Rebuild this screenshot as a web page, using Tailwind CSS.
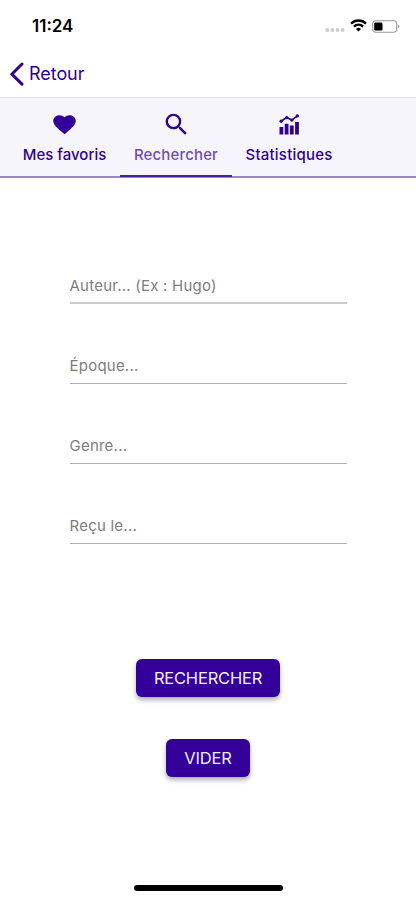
<!DOCTYPE html>
<html lang="fr">
<head>
<meta charset="utf-8">
<meta name="viewport" content="width=device-width">
<title>Rechercher</title>
<script src="https://cdn.jsdelivr.net/npm/@tailwindcss/browser@4"></script>
</head>
<body class="bg-white font-[Inter,sans-serif]">
<div class="flex h-[900px] w-[416px] flex-col overflow-hidden whitespace-nowrap">
  <header class="flex h-[98px] shrink-0 flex-col border-b border-[#e2e1e8]">
    <div class="flex h-[50px] items-center justify-between pt-[2px] pr-[16px] pl-[32px]">
      <span class="text-[17px] leading-5 font-semibold text-black">11:24</span>
      <div class="flex items-center">
        <svg class="mt-[7px] mr-[5px] h-[4px] w-[20px]" viewBox="0 0 20 4" fill="#cbcbcb"><circle cx="2.3" cy="2" r="1.9"/><circle cx="7.4" cy="2" r="1.9"/><circle cx="12.5" cy="2" r="1.9"/><circle cx="17.6" cy="2" r="1.9"/></svg>
        <svg class="-mt-px mr-[5px] h-[13px] w-[17px]" viewBox="0 0 17 13" fill="none" stroke="#000" stroke-width="2.3"><path d="M1 4.6a10.6 10.6 0 0 1 15 0"/><path d="M3.9 7.6a6.5 6.5 0 0 1 9.2 0"/><path d="M8.5 12.4 6 9.9a3.6 3.6 0 0 1 5 0z" fill="#000" stroke="none"/></svg>
        <svg class="h-[13px] w-[28px]" viewBox="0 0 28 13"><rect x=".7" y=".7" width="24" height="11.6" rx="3.2" fill="none" stroke="#999" stroke-width="1.1"/><rect x="2.2" y="2.5" width="8.3" height="8" rx="1.2"/><path d="M26 4.5q1.4.6 1.4 2t-1.4 2z" fill="#999"/></svg>
      </div>
    </div>
    <div class="flex h-[47px] items-center pl-[9px] text-[#31008f]">
      <svg class="h-[24px] w-[16px]" viewBox="0 0 16 24" fill="none" stroke="currentColor" stroke-width="3" stroke-linecap="round" stroke-linejoin="round"><path d="M13 2 2.8 12.2 13 22.1"/></svg>
      <span class="ml-[4px] text-[18px] leading-6 tracking-[-0.05px]">Retour</span>
    </div>
  </header>
  <nav class="flex h-[80px] shrink-0 border-b-2 border-b-[#9a85ca] bg-[#f6f5fc] pl-[9px] text-[15px] leading-5 font-medium text-[#31008f]">
    <div class="flex w-[111px] flex-col items-center pt-[14px]">
      <svg class="h-[25px] w-[27px]" viewBox="0 0 24 24" fill="#330099" preserveAspectRatio="none"><path d="m12 21.35-1.45-1.32C5.4 15.36 2 12.28 2 8.5 2 5.42 4.42 3 7.5 3c1.74 0 3.41.81 4.5 2.09C13.09 3.81 14.76 3 16.5 3 19.58 3 22 5.42 22 8.5c0 3.78-3.4 6.86-8.55 11.54z"/></svg>
      <span class="mt-[8px]">Mes favoris</span>
    </div>
    <div class="-mb-px flex w-[112px] flex-col items-center border-b-2 border-[#43208f] pt-[12px]">
      <svg class="h-[29px] w-[29px]" viewBox="0 0 24 24" fill="currentColor"><path d="M15.5 14h-.79l-.28-.27A6.47 6.47 0 0 0 16 9.5 6.5 6.5 0 1 0 9.5 16c1.61 0 3.09-.59 4.23-1.57l.27.28v.79l5 4.99L20.49 19zm-6 0C7.01 14 5 11.99 5 9.5S7.01 5 9.5 5 14 7.01 14 9.5 11.99 14 9.5 14"/></svg>
      <span class="mt-[6px] tracking-[0.15px] text-[#6f4db0]">Rechercher</span>
    </div>
    <div class="flex w-[114px] flex-col items-center pt-[16px]">
      <svg class="h-[21px] w-[21px]" viewBox="0 0 21 21" fill="currentColor"><path d="M.5 13h3.8v7.5H.5zM5.7 9.7h3.8v10.8H5.7zM10.9 11.5h3.8v9h-3.8zM16.1 8h3.8v12.5h-3.8z"/><path d="M2 7.3 7.7 3.5l5.2 2.6 5.5-4.3" fill="none" stroke="currentColor" stroke-width="1.7"/><circle cx="2.2" cy="7.3" r="1.7"/><circle cx="7.7" cy="3.6" r="1.7"/><circle cx="12.9" cy="6.1" r="1.7"/><circle cx="18.3" cy="1.9" r="1.7"/></svg>
      <span class="mt-[10px] tracking-[0.22px]">Statistiques</span>
    </div>
  </nav>
  <main class="flex flex-1 flex-col items-center">
    <form class="mt-[95px] flex w-[277px] flex-col gap-[49px] text-[15px] leading-5 tracking-[0.23px] text-[#7d7d7d]">
      <div class="h-[31px] border-b-2 border-[#cbcbcb] pt-[3px]">Auteur... (Ex : Hugo)</div>
      <div class="h-[31px] border-b border-[#b2b2b2] pt-[3px]">Époque...</div>
      <div class="h-[31px] border-b border-[#b2b2b2] pt-[3px]">Genre...</div>
      <div class="h-[31px] border-b border-[#b2b2b2] pt-[3px]">Reçu le...</div>
    </form>
    <button class="mt-[115px] h-[38px] w-[144px] rounded-[6px] bg-[#330099] text-[16.5px] tracking-[-0.2px] text-[#f3effc] shadow-[0_3px_5px_rgba(0,0,0,0.32)]">RECHERCHER</button>
    <button class="mt-[42px] h-[38px] w-[84px] rounded-[6px] bg-[#330099] text-[16.5px] tracking-[-0.2px] text-[#f3effc] shadow-[0_3px_5px_rgba(0,0,0,0.32)]">VIDER</button>
    <div class="mt-auto mb-[9px] h-[6px] w-[149px] rounded-full bg-black"></div>
  </main>
</div>
</body>
</html>
